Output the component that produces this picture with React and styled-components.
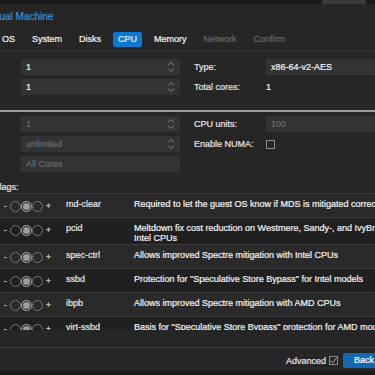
import React from "react";
import styled, { createGlobalStyle } from "styled-components";

const GlobalStyle = createGlobalStyle`
  html, body {
    margin: 0;
    padding: 0;
    width: 375px;
    height: 375px;
    overflow: hidden;
    background: #1a1a1a;
  }
  body {
    font-family: "Liberation Sans", Arial, sans-serif;
    font-size: 9px;
    color: #e6e6e6;
    -webkit-text-stroke: 0.2px currentColor;
  }
`;

const Desktop = styled.div`
  width: 375px;
  height: 375px;
  overflow: hidden;
  display: flex;
  flex-direction: column;
`;

const TopStrip = styled.div`
  height: 4px;
  flex-shrink: 0;
  display: flex;
  justify-content: flex-end;
  padding-right: 9px;
`;

const ResourceTab = styled.div`
  width: 44px;
  background: #3a3a3a;
`;

const Window = styled.div`
  margin-left: -100px;
  width: 539px;
  flex-shrink: 0;
  background: #262626;
  display: flex;
  flex-direction: column;
`;

const TitleBar = styled.div`
  height: 24px;
  padding-left: 49px;
  display: flex;
  align-items: center;
  font-size: 10px;
  color: #3d94db;
  white-space: nowrap;
`;

const TabBar = styled.div`
  display: flex;
  gap: 7px;
  padding: 4px 0 4px 48px;
  border-bottom: 1px solid #363636;
`;

const Tab = styled.div`
  height: 15px;
  line-height: 15px;
  padding: 0 5px;
  border-radius: 2px;
  white-space: nowrap;
  background: ${(p) => (p.$active ? "#0b78d1" : "transparent")};
  color: ${(p) => (p.$disabled ? "#686868" : "#f4f4f4")};
`;

const FormPanel = styled.div`
  display: flex;
  gap: 14px;
  padding: ${(p) => p.$pad};
`;

const Column = styled.div`
  display: flex;
  flex-direction: column;
  gap: 4px;
`;

const FieldRow = styled.div`
  display: flex;
  align-items: center;
  height: 16px;
`;

const Label = styled.div`
  width: ${(p) => p.$w}px;
  flex-shrink: 0;
  white-space: nowrap;
  color: #e6e6e6;
`;

const Field = styled.div`
  width: 159px;
  height: 16px;
  box-sizing: border-box;
  padding: 0 5px;
  background: #333333;
  display: flex;
  align-items: center;
  justify-content: space-between;
  white-space: nowrap;
  color: ${(p) => (p.$dim ? "#6c6c6c" : "#f4f4f4")};
`;

const Value = styled.div`
  color: #f4f4f4;
`;

const Box = styled.div`
  width: 9px;
  height: 9px;
  box-sizing: border-box;
  border: 1px solid #8a8a8a;
  display: flex;
  align-items: center;
  justify-content: center;
`;

const Divider = styled.div`
  height: 2px;
  background: #9c9c9c;
`;

const FlagsLabel = styled.div`
  padding: 10px 0 0 49px;
  line-height: 10px;
  margin-bottom: 1px;
  color: #e6e6e6;
  white-space: nowrap;
`;

const FlagsGrid = styled.div`
  height: 136px;
  overflow: hidden;
  margin-left: 49px;
  border-top: 1px solid #3b3b3b;
`;

const FlagRow = styled.div`
  display: grid;
  grid-template-columns: 113px 68px 272px 1fr;
  min-height: 23px;
  border-bottom: 1px solid #3b3b3b;
  background: ${(p) => (p.$alt ? "#202020" : "#2a2a2a")};
`;

const ValueCell = styled.div`
  display: flex;
  justify-content: flex-end;
  align-items: flex-start;
  padding: 7px 11px 0 0;
`;

const NameCell = styled.div`
  padding: 5px 4px 0;
  line-height: 10px;
  color: #e8e8e8;
`;

const DescCell = styled.div`
  padding: 5px 4px 1px;
  line-height: 10px;
  color: #f4f4f4;
`;

const Tristate = styled.div`
  display: flex;
  align-items: center;
  height: 11px;
  color: #cfcfcf;
`;

const Sign = styled.span`
  line-height: 11px;
  margin: ${(p) => (p.$plus ? "0 0 0 3px" : "0 3px 0 0")};
`;

const Radio = styled.div`
  width: 11px;
  height: 11px;
  box-sizing: border-box;
  border-radius: 50%;
  border: 1px solid ${(p) => (p.$checked ? "#b4b4b4" : "#767676")};
  display: flex;
  align-items: center;
  justify-content: center;
  &::after {
    content: "";
    display: ${(p) => (p.$checked ? "block" : "none")};
    width: 7px;
    height: 7px;
    border-radius: 50%;
    background: #9c9c9c;
  }
`;

const Filler = styled.div`
  height: 17px;
`;

const Footer = styled.div`
  border-top: 1px solid #383838;
  padding: 5px 6px 3px 0;
  display: flex;
  justify-content: flex-end;
  align-items: center;
`;

const AdvancedToggle = styled.label`
  display: flex;
  align-items: center;
  margin-right: 5px;
  color: #e6e6e6;
`;

const ToggleText = styled.span`
  margin-right: 3px;
`;

const Button = styled.div`
  width: 42px;
  height: 15px;
  line-height: 15px;
  text-align: center;
  color: #ffffff;
  background: #1467b3;
  border-radius: 2px;
  & + & {
    margin-left: 6px;
  }
`;

const Spinner = () => (
  <svg width="8" height="14" viewBox="0 0 8 14">
    <path d="M1 5.5 L4 2.5 L7 5.5 M1 8.5 L4 11.5 L7 8.5" fill="none" stroke="#8a8a8a" strokeWidth="1" />
  </svg>
);

const tabs = [
  { name: "General" },
  { name: "OS" },
  { name: "System" },
  { name: "Disks" },
  { name: "CPU", active: true },
  { name: "Memory" },
  { name: "Network", disabled: true },
  { name: "Confirm", disabled: true },
];

const flags = [
  ["md-clear", "Required to let the guest OS know if MDS is mitigated correctly"],
  ["pcid", "Meltdown fix cost reduction on Westmere, Sandy-, and IvyBridge Intel CPUs"],
  ["spec-ctrl", "Allows improved Spectre mitigation with Intel CPUs"],
  ["ssbd", "Protection for \"Speculative Store Bypass\" for Intel models"],
  ["ibpb", "Allows improved Spectre mitigation with AMD CPUs"],
  ["virt-ssbd", "Basis for \"Speculative Store Bypass\" protection for AMD models"],
  ["amd-ssbd", "Improves Spectre mitigation performance with AMD CPUs, best used with \"virt-ssbd\""],
  ["amd-no-ssb", "Notifies guest OS that host is not vulnerable for Spectre on AMD CPUs"],
];

const App = () => {
  return (
    <Desktop>
      <GlobalStyle />
      <TopStrip>
        <ResourceTab />
      </TopStrip>
      <Window>
        <TitleBar>Create: Virtual Machine</TitleBar>
        <TabBar>
          {tabs.map((t) => (
            <Tab key={t.name} $active={t.active} $disabled={t.disabled}>
              {t.name}
            </Tab>
          ))}
        </TabBar>

        <FormPanel $pad="7px 0 15px 21px">
          <Column>
            <FieldRow>
              <Label $w={100}>Sockets:</Label>
              <Field>1<Spinner /></Field>
            </FieldRow>
            <FieldRow>
              <Label $w={100}>Cores:</Label>
              <Field>1<Spinner /></Field>
            </FieldRow>
          </Column>
          <Column>
            <FieldRow>
              <Label $w={72}>Type:</Label>
              <Field>x86-64-v2-AES</Field>
            </FieldRow>
            <FieldRow>
              <Label $w={72}>Total cores:</Label>
              <Value>1</Value>
            </FieldRow>
          </Column>
        </FormPanel>

        <Divider />

        <FormPanel $pad="4px 0 0 21px">
          <Column>
            <FieldRow>
              <Label $w={100}>VCPUs:</Label>
              <Field $dim>1<Spinner /></Field>
            </FieldRow>
            <FieldRow>
              <Label $w={100}>CPU limit:</Label>
              <Field $dim>unlimited<Spinner /></Field>
            </FieldRow>
            <FieldRow>
              <Label $w={100}>CPU Affinity:</Label>
              <Field $dim>All Cores</Field>
            </FieldRow>
          </Column>
          <Column>
            <FieldRow>
              <Label $w={72}>CPU units:</Label>
              <Field $dim>100</Field>
            </FieldRow>
            <FieldRow>
              <Label $w={72}>Enable NUMA:</Label>
              <Box />
            </FieldRow>
          </Column>
        </FormPanel>

        <FlagsLabel>Extra CPU Flags:</FlagsLabel>
        <FlagsGrid>
          {flags.map(([name, desc], i) => (
            <FlagRow key={name} $alt={i % 2 === 1}>
              <ValueCell>
                <Tristate>
                  <Sign>-</Sign>
                  <Radio />
                  <Radio $checked />
                  <Radio />
                  <Sign $plus>+</Sign>
                </Tristate>
              </ValueCell>
              <NameCell>{name}</NameCell>
              <DescCell>{desc}</DescCell>
              <div />
            </FlagRow>
          ))}
        </FlagsGrid>
        <Filler />

        <Footer>
          <AdvancedToggle>
            <ToggleText>Advanced</ToggleText>
            <Box>
              <svg width="7" height="7" viewBox="0 0 7 7">
                <path d="M0.5 3.8 L2.6 5.8 L6.6 0.6" fill="none" stroke="#b0b0b0" strokeWidth="1" />
              </svg>
            </Box>
          </AdvancedToggle>
          <Button>Back</Button>
          <Button>Next</Button>
        </Footer>
      </Window>
    </Desktop>
  );
};

export default App;
